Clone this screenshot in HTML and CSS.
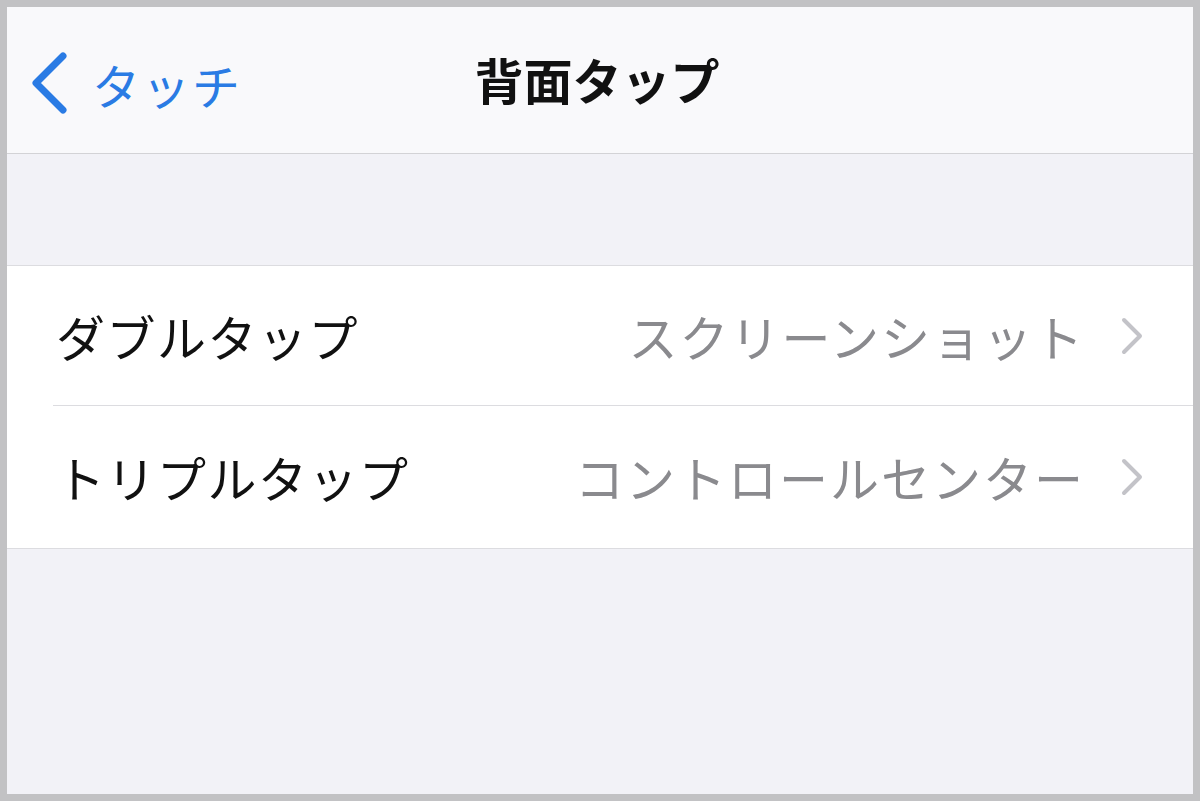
FILE: index.html
```html
<!DOCTYPE html>
<html lang="ja">
<head>
<meta charset="utf-8">
<title>背面タップ</title>
<link rel="stylesheet" href="styles.css">
</head>
<body>
<div class="frame">
  <header class="nav">
    <div class="back">
      <svg class="back-chevron" width="40" height="64" viewBox="0 0 40 64">
        <polyline points="33,4 6,31 33,58" fill="none" stroke="#2a7be4" stroke-width="7" stroke-linecap="round" stroke-linejoin="round"/>
      </svg>
      <span class="back-label">タッチ</span>
    </div>
    <h1 class="title">背面タップ</h1>
  </header>
  <div class="spacer"></div>
  <ul class="group">
    <li class="row">
      <span class="label">ダブルタップ</span>
      <span class="value">スクリーンショット</span>
      <svg class="chev" width="26" height="40" viewBox="0 0 26 40"><polyline points="5,4 21,20 5,36" fill="none" stroke="#c3c3c8" stroke-width="4" stroke-linecap="round" stroke-linejoin="round"/></svg>
    </li>
    <li class="row">
      <span class="label">トリプルタップ</span>
      <span class="value">コントロールセンター</span>
      <svg class="chev" width="26" height="40" viewBox="0 0 26 40"><polyline points="5,4 21,20 5,36" fill="none" stroke="#c3c3c8" stroke-width="4" stroke-linecap="round" stroke-linejoin="round"/></svg>
    </li>
  </ul>
</div>
</body>
</html>
```
FILE: styles.css
```css
html, body {
  margin: 0;
  padding: 0;
}
body {
  font-family: "Noto Sans CJK JP", "Noto Sans", sans-serif;
  background: #c2c2c4;
}
.frame {
  box-sizing: border-box;
  width: 1200px;
  height: 801px;
  border: 7px solid #c2c2c4;
  background: #f2f2f7;
  display: flex;
  flex-direction: column;
}
.nav {
  height: 146px;
  background: #f9f9fb;
  border-bottom: 1px solid #d3d3d6;
  position: relative;
  display: flex;
  align-items: center;
  justify-content: center;
  flex-shrink: 0;
}
.back {
  position: absolute;
  left: 23px;
  top: 45px;
  display: flex;
  align-items: center;
  gap: 22px;
  color: #2a7be4;
}
.back-chevron {
  display: block;
}
.back-label {
  font-size: 48px;
  line-height: 64px;
  letter-spacing: 2px;
}
.title {
  margin: 0;
  font-size: 49px;
  font-weight: 700;
  color: #111;
  line-height: 64px;
  margin-top: -2px;
  margin-left: -6px;
}
.spacer {
  height: 111px;
  flex-shrink: 0;
}
.group {
  list-style: none;
  margin: 0;
  padding: 0;
  background: #fff;
  border-top: 1px solid #dcdce0;
  border-bottom: 1px solid #dcdce0;
}
.row {
  height: 139px;
  display: flex;
  align-items: center;
  padding-left: 49px;
  padding-right: 48px;
}
.row + .row {
  border-top: 1px solid #dcdce0;
  margin-left: 46px;
  padding-left: 3px;
  height: 142px;
}
.label {
  font-size: 49px;
  color: #111;
  flex: 1;
  line-height: 60px;
  letter-spacing: 1.5px;
}
.value {
  font-size: 49px;
  color: #8a8a8e;
  line-height: 60px;
  letter-spacing: 2px;
  margin-right: 34px;
}
.chev {
  display: block;
}
```
